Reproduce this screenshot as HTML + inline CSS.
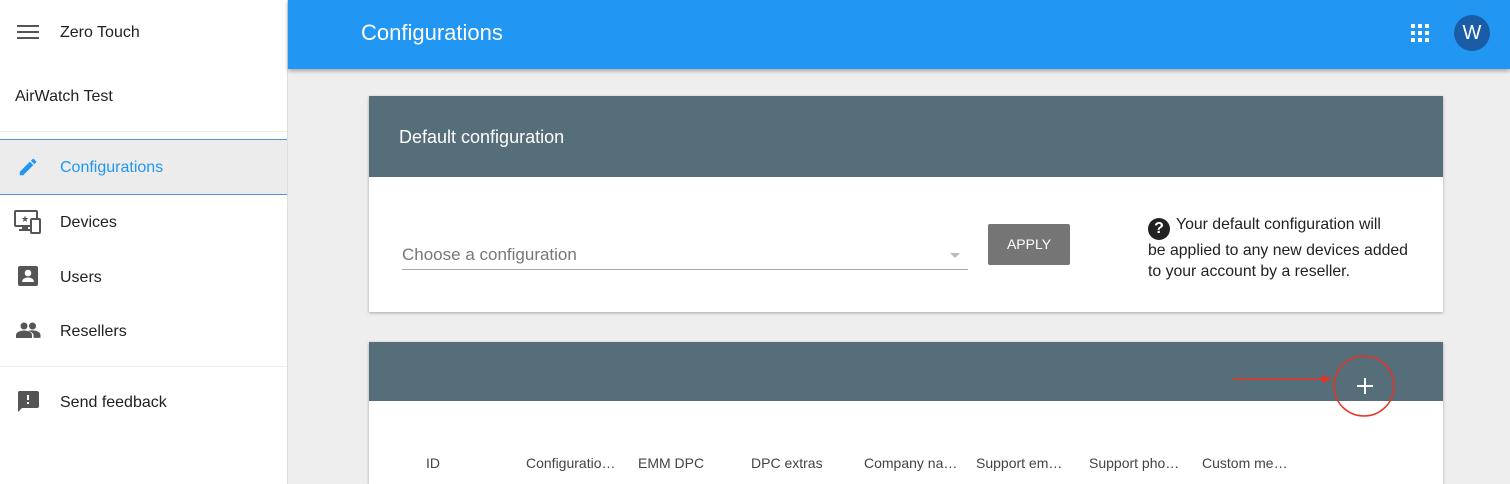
<!DOCTYPE html>
<html><head><style>
*{margin:0;padding:0;box-sizing:border-box}
html,body{width:1510px;height:484px;overflow:hidden}
body{background:#eeeeee;font-family:"Liberation Sans",Arial,sans-serif;position:relative;color:#212121}
.side{position:absolute;left:0;top:0;width:288px;height:484px;background:#fff;border-right:1px solid #ddd}
.abs{position:absolute}
.t{font-size:16px;color:#212121}
.top{position:absolute;left:288px;top:0;width:1222px;height:69px;background:#2196f3;box-shadow:0 2px 4px rgba(0,0,0,.3)}
.card{position:absolute;left:369px;width:1074px;background:#fff;box-shadow:0 1px 3px rgba(0,0,0,.3)}
.hd{background:#566d7a;color:#fff}
.col{position:absolute;top:455px;font-size:14px;color:#444}
</style></head><body>
<div class="side">
 <svg class="abs" style="left:17px;top:24px" width="22" height="16"><rect y="1" width="22" height="2" fill="#555"/><rect y="7" width="22" height="2" fill="#555"/><rect y="13" width="22" height="2" fill="#555"/></svg>
 <div class="abs t" style="left:60px;top:24px">Zero Touch</div>
 <div class="abs t" style="left:15px;top:88px">AirWatch Test</div>
 <div class="abs" style="left:0;top:131px;width:287px;height:1px;background:#eee"></div>
 <div class="abs" style="left:0;top:139px;width:287px;height:56px;background:#ececec;border-top:1px solid #5b8ed6;border-bottom:1px solid #5b8ed6"></div>
 <svg class="abs" style="left:17px;top:156px" width="22" height="22" viewBox="0 0 24 24"><path fill="#2196f3" d="M3 17.25V21h3.75L17.81 9.94l-3.75-3.75L3 17.25zM20.71 7.04a1 1 0 000-1.41l-2.34-2.34a1 1 0 00-1.41 0l-1.83 1.83 3.75 3.75 1.83-1.83z"/></svg>
 <div class="abs" style="left:60px;top:159px;font-size:16px;color:#2196f3">Configurations</div>
 <svg class="abs" style="left:14px;top:210px" width="28" height="24" viewBox="0 0 28 24"><rect x="1" y="1" width="22" height="15" rx="1" fill="none" stroke="#555" stroke-width="2"/><rect x="8" y="16" width="6" height="3" fill="#555"/><rect x="5" y="19" width="12" height="2" fill="#555"/><rect x="17" y="9" width="9" height="14" rx="1" fill="#fff" stroke="#555" stroke-width="2"/><text x="7" y="12" font-size="9" fill="#555">★</text></svg>
 <div class="abs t" style="left:60px;top:214px">Devices</div>
 <svg class="abs" style="left:18px;top:266px" width="20" height="20" viewBox="0 0 20 20"><rect width="20" height="20" rx="2" fill="#555"/><circle cx="10" cy="7" r="3.3" fill="#fff"/><path d="M4 16c0-3 3-4.5 6-4.5s6 1.5 6 4.5z" fill="#fff"/></svg>
 <div class="abs t" style="left:60px;top:269px">Users</div>
 <svg class="abs" style="left:16px;top:322px" width="25" height="16" viewBox="0 0 25 16"><circle cx="16.5" cy="4" r="3.5" fill="#555"/><circle cx="8" cy="4" r="3.5" fill="#555"/><path d="M0 16v-3c0-3 5-4.5 8-4.5s8 1.5 8 4.5v3z" fill="#555"/><path d="M12 9c1.5-.5 3.2-.6 4.5-.6 3 0 8 1.5 8 4.5v3h-7v-3c0-1.6-2-3-5.5-3.9z" fill="#555"/></svg>
 <div class="abs t" style="left:60px;top:323px">Resellers</div>
 <div class="abs" style="left:0;top:366px;width:287px;height:1px;background:#eee"></div>
 <svg class="abs" style="left:17px;top:391px" width="22" height="22" viewBox="0 0 22 22"><path d="M2 0h18a2 2 0 012 2v13a2 2 0 01-2 2H5l-4 4V2a2 2 0 011-2z" fill="#555"/><rect x="10" y="4" width="2" height="5" fill="#fff"/><rect x="10" y="11" width="2" height="2" fill="#fff"/></svg>
 <div class="abs t" style="left:60px;top:394px">Send feedback</div>
</div>
<div class="top">
 <div class="abs" style="left:73px;top:20px;font-size:22px;color:#fff">Configurations</div>
 <svg class="abs" style="left:1123px;top:24px" width="18" height="18"><g fill="#fff"><rect x="0" y="0" width="4" height="4"/><rect x="7" y="0" width="4" height="4"/><rect x="14" y="0" width="4" height="4"/><rect x="0" y="7" width="4" height="4"/><rect x="7" y="7" width="4" height="4"/><rect x="14" y="7" width="4" height="4"/><rect x="0" y="14" width="4" height="4"/><rect x="7" y="14" width="4" height="4"/><rect x="14" y="14" width="4" height="4"/></g></svg>
 <div class="abs" style="left:1166px;top:15px;width:36px;height:36px;border-radius:50%;background:#1a5ca5;color:#fff;font-size:20px;text-align:center;line-height:36px">W</div>
</div>
<div class="card" style="top:96px;height:216px">
 <div class="hd" style="height:81px;padding:31px 0 0 30px;font-size:18px">Default configuration</div>
 <div class="abs" style="left:33px;top:149px;font-size:17px;color:#777">Choose a configuration</div>
 <div class="abs" style="left:33px;top:173px;width:566px;height:1px;background:#aaa"></div>
 <div class="abs" style="left:581px;top:157px;border-left:5px solid transparent;border-right:5px solid transparent;border-top:5px solid #bbb"></div>
 <div class="abs" style="left:619px;top:128px;width:82px;height:41px;background:#757575;border-radius:2px;color:#fff;font-size:14px;text-align:center;line-height:40px">APPLY</div>
 <div class="abs" style="left:779px;top:118px;width:270px;font-size:15.8px;line-height:21px;color:#212121"><span style="display:inline-block;width:22px;height:22px;border-radius:50%;background:#222;color:#fff;text-align:center;font-weight:bold;font-size:16px;line-height:22px;vertical-align:-4px;margin-right:6px">?</span>Your default configuration will<br>be applied to any new devices added<br>to your account by a reseller.</div>
</div>
<div class="card" style="top:342px;height:142px">
 <div class="hd" style="height:59px"></div>
</div>
<svg class="abs" style="left:1230px;top:354px" width="170" height="66"><line x1="3" y1="25" x2="95" y2="25" stroke="#e53322" stroke-width="1.5"/><path d="M92 21l10 4-10 4z" fill="#e53322"/><circle cx="134" cy="32" r="30" fill="none" stroke="#e53322" stroke-width="1.5"/><path d="M135 24v16M127 32h16" stroke="#fff" stroke-width="2"/></svg>
<div class="col" style="left:426px">ID</div>
<div class="col" style="left:526px">Configuratio…</div>
<div class="col" style="left:638px">EMM DPC</div>
<div class="col" style="left:751px">DPC extras</div>
<div class="col" style="left:864px">Company na…</div>
<div class="col" style="left:976px">Support em…</div>
<div class="col" style="left:1089px">Support pho…</div>
<div class="col" style="left:1202px">Custom me…</div>
</body></html>
